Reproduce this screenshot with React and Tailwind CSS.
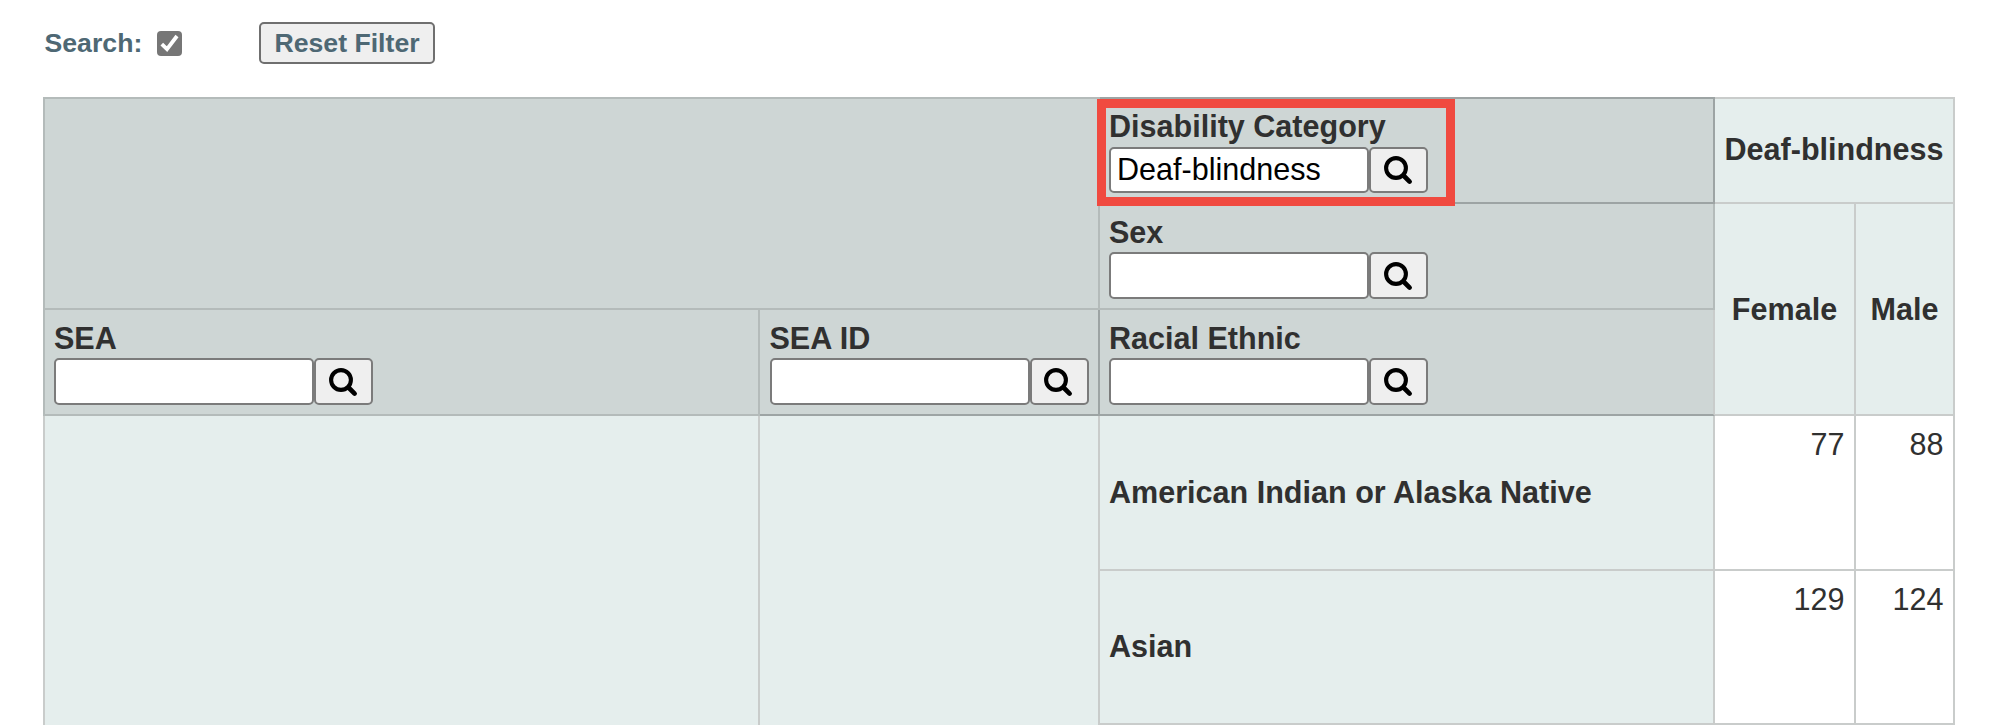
import React from "react";

function SearchIcon() {
  return (
    <svg className="mr-[2px] block h-[30px] w-[30px]" viewBox="0 0 30 30" fill="none" stroke="#000" aria-hidden="true">
      <circle cx="13" cy="13" r="9.9" strokeWidth="4.1" />
      <path d="M20.5 20.5L26.6 26.6" strokeWidth="4.7" strokeLinecap="round" />
    </svg>
  );
}

function FilterField({ label, value = "", first = false }) {
  return (
    <div className="flex flex-col pl-[9px]">
      <label
        className={
          first
            ? "mt-[8px] h-[40px] whitespace-nowrap font-bold leading-[38px]"
            : "mt-[9px] h-[39px] whitespace-nowrap font-bold leading-[38px]"
        }
      >
        {label}
      </label>
      <div className={first ? "flex h-[46px]" : "flex h-[47px]"}>
        <input
          type="text"
          aria-label={label}
          defaultValue={value}
          className="h-full w-[260px] rounded-[5px] border-2 border-[#7b7b7b] bg-white px-[6px] pb-[1px] text-[30.55px] text-black outline-none"
        />
        <button
          type="button"
          className="flex h-full w-[59px] items-center justify-center rounded-[5px] border-2 border-[#7b7b7b] bg-[#efefef]"
        >
          <SearchIcon />
        </button>
      </div>
    </div>
  );
}

export default function App() {
  return (
    <div className="flex h-[725px] w-[2000px] flex-col overflow-hidden bg-white font-['Liberation_Sans',Arial,sans-serif] text-[30.55px] text-[#303030]">
      <div className="flex h-[97px] shrink-0 items-start pl-[44.5px] text-[26.67px] font-bold text-[#4e6874]">
        <span className="mt-[26px] w-[112.5px] whitespace-nowrap leading-[34px]">Search:</span>
        <span className="mt-[31px] flex h-[25px] w-[25px] items-center justify-center rounded-[4px] bg-[#767676]">
          <svg className="block h-[25px] w-[25px]" viewBox="0 0 25 25" fill="none" stroke="#fff" strokeWidth="3.8">
            <path d="M4.8 13.2L10 18.2L20 5" />
          </svg>
        </span>
        <button
          type="button"
          className="ml-[77px] mt-[22px] h-[42px] w-[176px] whitespace-nowrap rounded-[5px] border-2 border-[#6f6f6f] bg-[#efefef] pb-[1px] leading-[36px]"
        >
          Reset Filter
        </button>
      </div>

      <div className="ml-[43px] grid h-[628px] w-[1912px] shrink-0 grid-cols-[717px_340px_615px_141px_99px] grid-rows-[107px_106px_106px_155px_154px]">
        <div className="col-span-2 row-span-2 border-2 border-[#b4bbba] bg-[#ced6d5]" />
        <div className="relative border-y-2 border-r-2 border-[#9da4a4] bg-[#ced6d5]">
          <FilterField label="Disability Category" value="Deaf-blindness" first />
          <div className="pointer-events-none absolute -left-[3px] top-0 h-[107px] w-[358px] border-[9px] border-[#f04a40]" />
        </div>
        <div className="col-span-2 flex items-center justify-center border-y-2 border-r-2 border-[#c9cccb] bg-[#e5eeed] pb-[1px] font-bold">
          Deaf-blindness
        </div>

        <div className="border-b-2 border-r-2 border-[#b4bbba] bg-[#ced6d5]">
          <FilterField label="Sex" />
        </div>
        <div className="row-span-2 flex items-center justify-center border-b-2 border-r-2 border-[#c9cccb] bg-[#e5eeed] pt-[1px] font-bold">
          Female
        </div>
        <div className="row-span-2 flex items-center justify-center border-b-2 border-r-2 border-[#c9cccb] bg-[#e5eeed] pt-[1px] font-bold">
          Male
        </div>

        <div className="border-x-2 border-b-2 border-[#b4bbba] bg-[#ced6d5]">
          <FilterField label="SEA" />
        </div>
        <div className="border-b-2 border-r-2 border-[#9da4a4] bg-[#ced6d5] pl-[0.5px]">
          <FilterField label="SEA ID" />
        </div>
        <div className="border-b-2 border-r-2 border-b-[#9da4a4] border-r-[#c9cccb] bg-[#ced6d5]">
          <FilterField label="Racial Ethnic" />
        </div>

        <div className="row-span-2 border-x-2 border-[#c9cccb] bg-[#e5eeed]" />
        <div className="row-span-2 border-r-2 border-[#c9cccb] bg-[#e5eeed]" />
        <div className="flex items-center border-b-2 border-r-2 border-[#c9cccb] bg-[#e5eeed] pl-[9px] font-bold">
          American Indian or Alaska Native
        </div>
        <div className="border-b-2 border-r-2 border-[#c9cccb] bg-white pr-[9.5px] pt-[9px] text-right leading-[38px]">77</div>
        <div className="border-b-2 border-r-2 border-[#c9cccb] bg-white pr-[9.5px] pt-[9px] text-right leading-[38px]">88</div>

        <div className="flex items-center border-b-2 border-r-2 border-[#c9cccb] bg-[#e5eeed] pl-[9px] font-bold">
          Asian
        </div>
        <div className="border-b-2 border-r-2 border-[#c9cccb] bg-white pr-[9.5px] pt-[9px] text-right leading-[38px]">129</div>
        <div className="border-b-2 border-r-2 border-[#c9cccb] bg-white pr-[9.5px] pt-[9px] text-right leading-[38px]">124</div>
      </div>
    </div>
  );
}
